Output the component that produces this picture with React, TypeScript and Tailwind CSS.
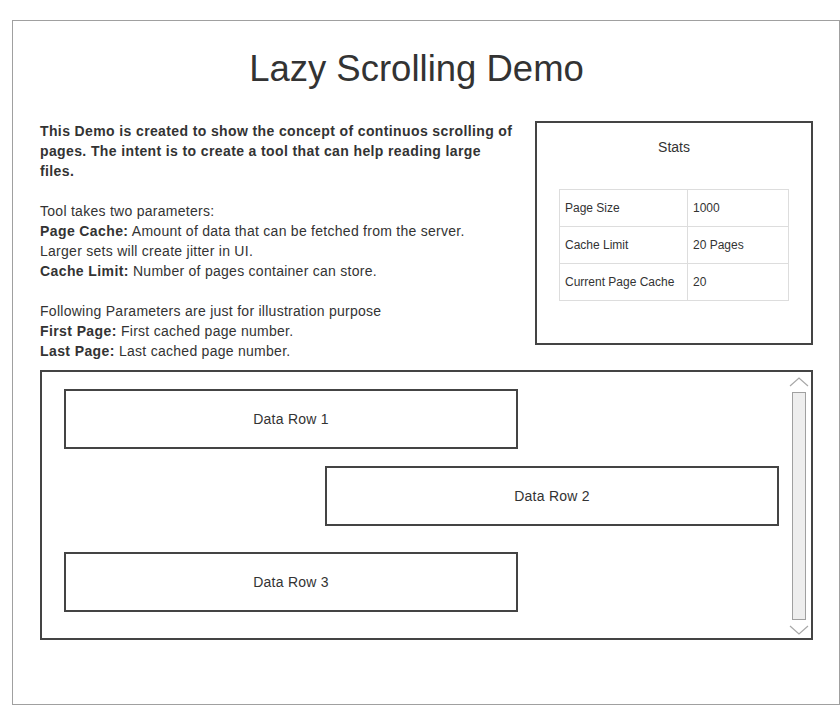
const stats = [
  { label: "Page Size", value: "1000" },
  { label: "Cache Limit", value: "20 Pages" },
  { label: "Current Page Cache", value: "20" },
];

const Chevron = ({ up }: { up?: boolean }) => (
  <svg width="20" height="10" viewBox="0 0 20 10" className="block">
    <polyline
      points={up ? "1,9 10,1 19,9" : "1,1 10,9 19,1"}
      fill="none"
      stroke="#a8a8a8"
      strokeWidth="1.2"
    />
  </svg>
);

const DataRow = ({ label, className }: { label: string; className: string }) => (
  <div
    className={`w-[454px] h-[60px] border-2 border-[#444] flex items-center justify-center text-[14px] tracking-[0.25px] text-[#333] ${className}`}
  >
    {label}
  </div>
);

const App = () => {
  return (
    <div className="w-[840px] h-[705px] bg-white pt-[20px] pl-[12px] font-['Liberation_Sans',Arial,sans-serif] text-[#333]">
      <div className="w-[828px] h-[685px] border border-[#a0a0a0] pl-[27px] pr-[26px]">
        <h1 className="text-[36.5px] leading-[44px] text-center mt-[26px] pr-[20px]">
          Lazy Scrolling Demo
        </h1>

        <div className="flex justify-between mt-[30px]">
          <div className="w-[476px] text-[14px] leading-[20px] tracking-[0.27px]">
            <p className="font-bold tracking-[0.38px]">
              This Demo is created to show the concept of continuos scrolling of pages. The
              intent is to create a tool that can help reading large files.
            </p>
            <p className="mt-[20px]">Tool takes two parameters:</p>
            <p>
              <b className="tracking-[0.4px]">Page Cache:</b> Amount of data that can be fetched
              from the server.
            </p>
            <p>Larger sets will create jitter in UI.</p>
            <p>
              <b className="tracking-[0.4px]">Cache Limit:</b> Number of pages container can store.
            </p>
            <p className="mt-[20px]">Following Parameters are just for illustration purpose</p>
            <p>
              <b className="tracking-[0.4px]">First Page:</b> First cached page number.
            </p>
            <p>
              <b className="tracking-[0.4px]">Last Page:</b> Last cached page number.
            </p>
          </div>

          <div className="w-[278px] h-[224px] shrink-0 border-2 border-[#444] flex flex-col items-center">
            <div className="mt-[14px] text-[14px] leading-[20px]">Stats</div>
            <table className="mt-[32px] w-[230px] border-collapse text-[12px] leading-[14px]">
              <tbody>
                {stats.map((s) => (
                  <tr key={s.label} className="h-[37px]">
                    <td className="w-[128px] border border-[#ddd] pl-[5px]">{s.label}</td>
                    <td className="border border-[#ddd] pl-[5px]">{s.value}</td>
                  </tr>
                ))}
              </tbody>
            </table>
          </div>
        </div>

        <div className="mt-[9px] h-[270px] border-2 border-[#444] flex">
          <div className="flex-1 pl-[22px] pt-[17px]">
            <DataRow label="Data Row 1" className="" />
            <DataRow label="Data Row 2" className="mt-[17px] ml-[261px]" />
            <DataRow label="Data Row 3" className="mt-[26px]" />
          </div>
          <div className="w-[24px] flex flex-col items-center pt-[5px] pb-[3px]">
            <Chevron up />
            <div className="flex-1 w-[14px] my-[5px] bg-[#eee] border border-[#a0a0a0]" />
            <Chevron />
          </div>
        </div>
      </div>
    </div>
  );
};

export default App;
